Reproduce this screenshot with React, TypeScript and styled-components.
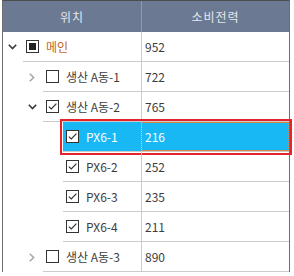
import React from "react";
import styled, { createGlobalStyle } from "styled-components";

type Check = "on" | "off" | "partial";
type Expand = "open" | "closed" | "none";

interface NodeRow {
  level: number;
  label: string;
  value: number;
  expand: Expand;
  check: Check;
  accent?: boolean;
  selected?: boolean;
}

const rows: NodeRow[] = [
  { level: 0, label: "메인", value: 952, expand: "open", check: "partial", accent: true },
  { level: 1, label: "생산 A동-1", value: 722, expand: "closed", check: "off" },
  { level: 1, label: "생산 A동-2", value: 765, expand: "open", check: "on" },
  { level: 2, label: "PX6-1", value: 216, expand: "none", check: "on", selected: true },
  { level: 2, label: "PX6-2", value: 252, expand: "none", check: "on" },
  { level: 2, label: "PX6-3", value: 235, expand: "none", check: "on" },
  { level: 2, label: "PX6-4", value: 211, expand: "none", check: "on" },
  { level: 1, label: "생산 A동-3", value: 890, expand: "closed", check: "off" },
];

const NAME_COL = 138;
const indentOf = (level: number) => 20 + level * 20;

const GlobalStyle = createGlobalStyle`
  html, body {
    margin: 0;
    background: #ffffff;
  }
  body {
    font-family: "Noto Sans CJK KR", "Noto Sans", sans-serif;
    font-size: 12px;
  }
`;

const Frame = styled.div`
  margin-left: 2px;
  width: 286px;
  border-top: 1px solid #4d4d4d;
  border-left: 1px solid #6e6e6e;
  border-right: 1px solid #6e6e6e;
`;

const Header = styled.div`
  display: grid;
  grid-template-columns: ${NAME_COL}px 1fr;
  height: 31px;
  background: #6b7a92;
  color: #e4e8ee;
`;

const HeaderCell = styled.div<{ $divider?: boolean }>`
  display: flex;
  align-items: center;
  justify-content: center;
  border-left: ${(p) => (p.$divider ? "1px solid #8e9bb0" : "none")};
  letter-spacing: 1px;
`;

const Row = styled.div`
  display: flex;
  height: 30px;
`;

const Indent = styled.div<{ $level: number }>`
  width: ${(p) => indentOf(p.$level)}px;
  flex: none;
  display: flex;
  justify-content: flex-end;
  padding-right: 2px;
  box-sizing: border-box;
`;

const ArrowSlot = styled.div`
  width: 18px;
  display: flex;
  align-items: center;
  justify-content: center;
`;

const Lined = styled.div<{ $selected?: boolean }>`
  flex: 1;
  display: flex;
  border-bottom: 1px solid #cbcbcb;
  background: ${(p) => (p.$selected ? "#18b8f5" : "transparent")};
  color: ${(p) => (p.$selected ? "#ffffff" : "#3d3d3d")};
  outline: ${(p) => (p.$selected ? "2px solid #e5232b" : "none")};
  outline-offset: 1px;
`;

const NameCell = styled.div<{ $level: number }>`
  width: ${(p) => NAME_COL - indentOf(p.$level)}px;
  flex: none;
  display: flex;
  align-items: center;
  gap: 7px;
  padding-left: 3px;
  box-sizing: border-box;
  white-space: nowrap;
  overflow: hidden;
`;

const Label = styled.span<{ $accent?: boolean }>`
  color: ${(p) => (p.$accent ? "#c2642a" : "inherit")};
`;

const ValueCell = styled.div<{ $focused?: boolean }>`
  flex: 1;
  display: flex;
  align-items: center;
  padding-left: 3px;
  border-left: 1px solid #cbcbcb;
  outline: ${(p) => (p.$focused ? "1px dotted #d98b4a" : "none")};
  outline-offset: -1px;
`;

const Box = styled.div`
  width: 13px;
  height: 13px;
  box-sizing: border-box;
  border: 1px solid #333333;
  background: #ffffff;
  flex: none;
  display: flex;
  align-items: center;
  justify-content: center;
`;

const Fill = styled.div`
  width: 7px;
  height: 7px;
  background: #222222;
`;

const Arrow: React.FC<{ expand: Expand }> = ({ expand }) => {
  if (expand === "none") return null;
  if (expand === "open")
    return (
      <svg width="9" height="6" viewBox="0 0 9 6">
        <path d="M0.8 0.8 L4.5 4.6 L8.2 0.8" fill="none" stroke="#3a3a3a" strokeWidth="1.6" />
      </svg>
    );
  return (
    <svg width="6" height="9" viewBox="0 0 6 9">
      <path d="M0.8 0.8 L4.6 4.5 L0.8 8.2" fill="none" stroke="#a8a8a8" strokeWidth="1.6" />
    </svg>
  );
};

const CheckBox: React.FC<{ state: Check }> = ({ state }) => (
  <Box>
    {state === "partial" && <Fill />}
    {state === "on" && (
      <svg width="11" height="11" viewBox="0 0 11 11">
        <path d="M1.8 5.6 L4.3 8 L9.4 2.6" fill="none" stroke="#333333" strokeWidth="1.2" />
      </svg>
    )}
  </Box>
);

const App: React.FC = () => {
  return (
    <>
      <GlobalStyle />
      <Frame>
        <Header>
          <HeaderCell>위치</HeaderCell>
          <HeaderCell $divider>소비전력</HeaderCell>
        </Header>
        {rows.map((r, i) => (
          <Row key={i}>
            <Indent $level={r.level}>
              <ArrowSlot>
                <Arrow expand={r.expand} />
              </ArrowSlot>
            </Indent>
            <Lined $selected={r.selected}>
              <NameCell $level={r.level}>
                <CheckBox state={r.check} />
                <Label $accent={r.accent}>{r.label}</Label>
              </NameCell>
              <ValueCell $focused={r.selected}>{r.value}</ValueCell>
            </Lined>
          </Row>
        ))}
      </Frame>
    </>
  );
};

export default App;
